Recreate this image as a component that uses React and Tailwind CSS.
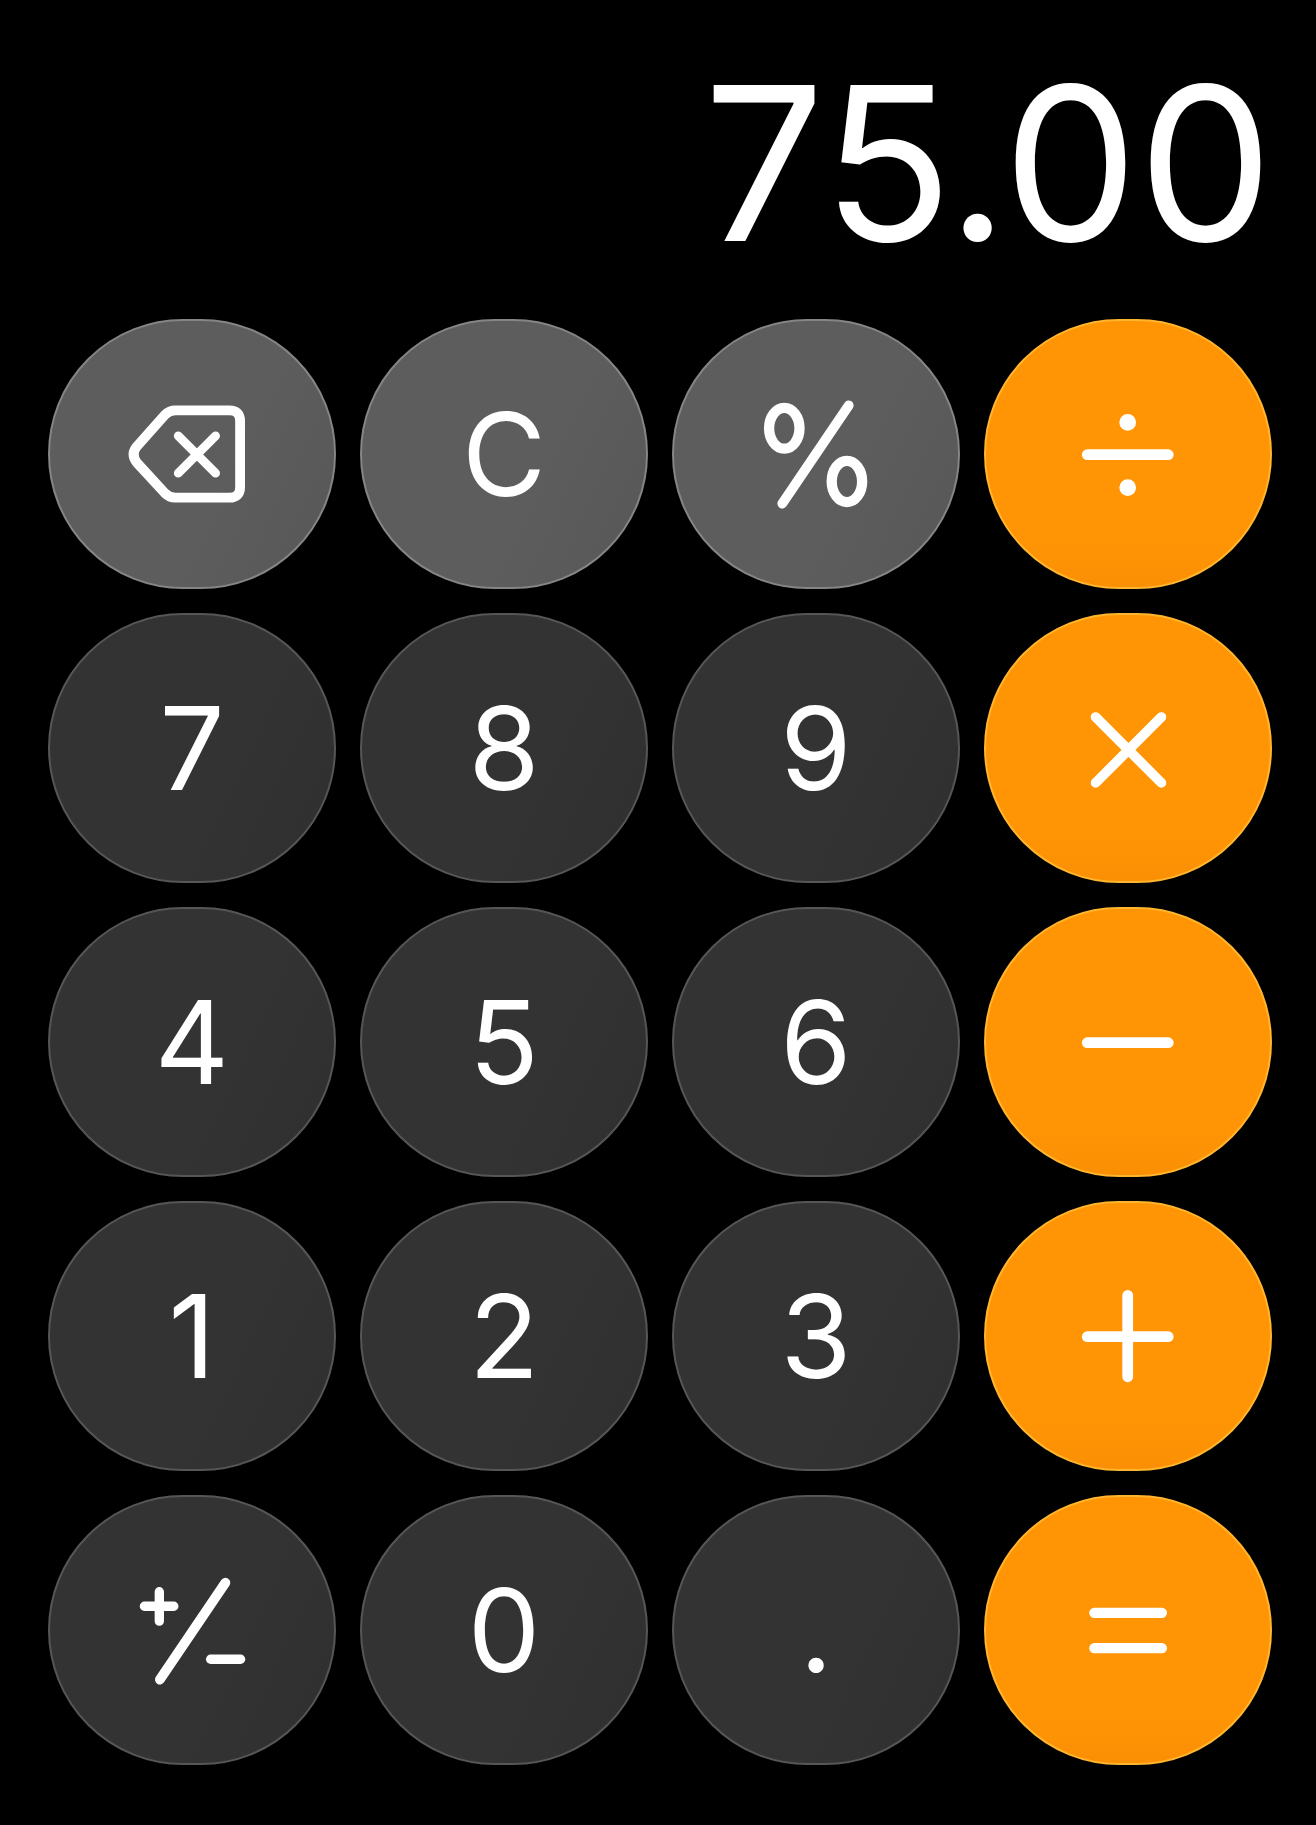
const dark = "bg-[linear-gradient(115deg,#333333_0%,#333333_60%,#2f2f2f_100%)] border-[#565656]";
const func = "bg-[linear-gradient(115deg,#5d5d5d_0%,#5d5d5d_60%,#575757_100%)] border-[#858585]";
const orange = "bg-[linear-gradient(180deg,#ff9505_0%,#ff9505_82%,#fa8f04_100%)] border-[#ffb52e]";

function Key({ tone, label, children }) {
  return (
    <button
      aria-label={label}
      className={`h-[270px] w-[288px] rounded-full border-2 pt-[1px] flex items-center justify-center text-white text-[115px] leading-none font-normal ${tone}`}
    >
      {children}
    </button>
  );
}

function Icon({ children }) {
  return (
    <svg viewBox="0 0 288 270" className="h-full w-full" fill="none" stroke="#fff" strokeLinecap="round" strokeLinejoin="round">
      {children}
    </svg>
  );
}

const Bar = () => <path d="M102.5 135.2H185" strokeWidth="11" />;

export default function App() {
  return (
    <div className="h-[1825px] w-[1316px] bg-black font-['Inter',sans-serif] overflow-hidden">
      <div className="h-[319px] flex justify-end items-start pr-[43px] pt-[46px]">
        <div className="text-white text-[214px] leading-[1.1] font-normal">75.00</div>
      </div>
      <div className="grid grid-cols-[repeat(4,288px)] gap-x-[24px] gap-y-[24px] pl-[48px]">
        <Key tone={func} label="Backspace">
          <Icon>
            <path d="M127 90H182Q193 90 193 101V168Q193 179 182 179H127Q121 179 116.5 174.5L88 143.5Q81 135 88 126.5L116.5 94.5Q121 90 127 90Z" strokeWidth="10" />
            <path d="M130 116L168 154M168 116L130 154" strokeWidth="9" />
          </Icon>
        </Key>
        <Key tone={func} label="Clear">C</Key>
        <Key tone={func} label="Percent">
          <Icon>
            <ellipse cx="111.7" cy="108.3" rx="15.5" ry="20.8" strokeWidth="10.5" />
            <ellipse cx="175.5" cy="162.5" rx="15.5" ry="21" strokeWidth="10.5" />
            <path d="M177.3 85L109.7 185" strokeWidth="10" />
          </Icon>
        </Key>
        <Key tone={orange} label="Divide">
          <Icon>
            <Bar />
            <circle cx="143.7" cy="102.3" r="8.5" fill="#fff" stroke="none" />
            <circle cx="143.7" cy="168.7" r="8.5" fill="#fff" stroke="none" />
          </Icon>
        </Key>

        <Key tone={dark}>7</Key>
        <Key tone={dark}>8</Key>
        <Key tone={dark}>9</Key>
        <Key tone={orange} label="Multiply">
          <Icon>
            <path d="M111 103L178 170M178 103L111 170" strokeWidth="10" />
          </Icon>
        </Key>

        <Key tone={dark}>4</Key>
        <Key tone={dark}>5</Key>
        <Key tone={dark}>6</Key>
        <Key tone={orange} label="Subtract">
          <Icon><Bar /></Icon>
        </Key>

        <Key tone={dark}>1</Key>
        <Key tone={dark}>2</Key>
        <Key tone={dark}>3</Key>
        <Key tone={orange} label="Add">
          <Icon>
            <Bar />
            <path d="M143.7 93V176" strokeWidth="11" />
          </Icon>
        </Key>

        <Key tone={dark} label="Toggle sign">
          <Icon>
            <path d="M95.5 110.3H125.5M110.7 95.5V125.5" strokeWidth="9.5" />
            <path d="M178 86.3L111.3 185" strokeWidth="10" />
            <path d="M163 164.3H193.5" strokeWidth="9.5" />
          </Icon>
        </Key>
        <Key tone={dark}>0</Key>
        <Key tone={dark}>.</Key>
        <Key tone={orange} label="Equals">
          <Icon>
            <path d="M109.7 117H178.5M109.7 153H178.5" strokeWidth="10.5" />
          </Icon>
        </Key>
      </div>
    </div>
  );
}
